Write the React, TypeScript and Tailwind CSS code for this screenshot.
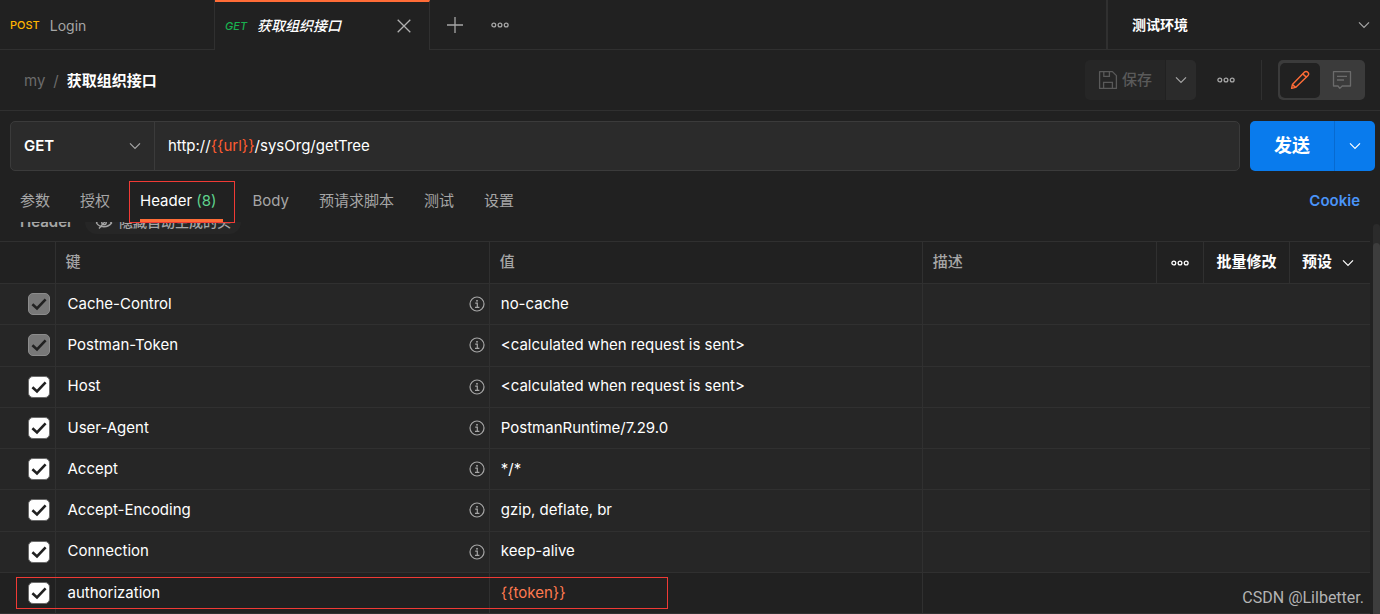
import { useState } from 'react';

const sans = "font-['Inter','Noto_Sans_CJK_SC',sans-serif]";

function Chevron({ className = '' }: { className?: string }) {
  return (
    <svg className={`pointer-events-none h-3 w-3 shrink-0 ${className}`} viewBox="0 0 12 12" fill="none" stroke="currentColor" strokeWidth="1.2" aria-hidden="true">
      <path d="M1 3.4 6 8.4 11 3.4" />
    </svg>
  );
}

function Dots() {
  return (
    <svg width="18" height="6" viewBox="0 0 18 6" fill="none" stroke="currentColor" strokeWidth="1.3" aria-hidden="true">
      <circle cx="2.8" cy="3" r="1.9" />
      <circle cx="9" cy="3" r="1.9" />
      <circle cx="15.2" cy="3" r="1.9" />
    </svg>
  );
}

function InfoIcon() {
  return (
    <svg className="shrink-0 text-[#a6a6a6]" width="16" height="16" viewBox="0 0 16 16" fill="none" stroke="currentColor" aria-hidden="true">
      <circle cx="8" cy="8" r="7" strokeWidth="1.2" />
      <path d="M6.2 7.2H8.3V11.2M6 11.4H10.4" strokeWidth="1.2" />
      <rect x="7.2" y="4" width="1.6" height="1.6" fill="currentColor" stroke="none" />
    </svg>
  );
}

function SaveIcon() {
  return (
    <svg width="20" height="20" viewBox="0 0 20 20" fill="none" stroke="currentColor" strokeWidth="1.3" aria-hidden="true">
      <path d="M1.6 1.6H14.4L18.4 5.6V18.4H1.6Z" strokeLinejoin="round" />
      <path d="M5.8 1.8V6.4H11.4V1.8M5.6 18.2V12.4H14.4V18.2" />
    </svg>
  );
}

function PencilIcon() {
  return (
    <svg width="20" height="20" viewBox="0 0 20 20" fill="none" stroke="currentColor" strokeWidth="1.4" strokeLinejoin="round" aria-hidden="true">
      <path d="M1.6 18.4 2.4 14.6 14.3 2.2A2.2 2.2 0 0 1 17.8 5.7L5.6 17.4Z" />
      <path d="M13.2 3.4Q14 6.6 16.8 6.7M2.4 14.6 5.6 17.4" />
    </svg>
  );
}

function CommentIcon() {
  return (
    <svg width="20" height="20" viewBox="0 0 20 20" fill="none" stroke="currentColor" strokeWidth="1.3" strokeLinejoin="round" aria-hidden="true">
      <path d="M1.5 1.6H18.5V16H10.2L7.8 18.4 6 16H1.5Z" />
      <path d="M5 6.4H15M5 10H12" />
    </svg>
  );
}

function HideIcon() {
  return (
    <svg width="18" height="16" viewBox="0 0 18 16" fill="none" stroke="currentColor" strokeWidth="1.4" aria-hidden="true">
      <path d="M1.5 9C4 3.5 13 3.5 16.5 9 13 14 4.5 14 1.5 9ZM4 14.5 15 2" />
      <circle cx="9" cy="8.6" r="2.2" />
    </svg>
  );
}

type Header = { key: string; value: string; auto?: boolean; locked?: boolean; variable?: boolean };

const headers: Header[] = [
  { key: 'Cache-Control', value: 'no-cache', auto: true, locked: true },
  { key: 'Postman-Token', value: '<calculated when request is sent>', auto: true, locked: true },
  { key: 'Host', value: '<calculated when request is sent>', auto: true },
  { key: 'User-Agent', value: 'PostmanRuntime/7.29.0', auto: true },
  { key: 'Accept', value: '*/*', auto: true },
  { key: 'Accept-Encoding', value: 'gzip, deflate, br', auto: true },
  { key: 'Connection', value: 'keep-alive', auto: true },
  { key: 'authorization', value: '{{token}}', variable: true },
];

function Tick({ label, locked }: { label: string; locked?: boolean }) {
  return (
    <label className="ml-7 grid w-[22px] place-items-center">
      <input
        type="checkbox"
        aria-label={label}
        defaultChecked
        disabled={locked}
        className="peer col-start-1 row-start-1 h-[22px] w-[22px] appearance-none rounded-[5px] border border-[#6b6b6b] bg-transparent checked:bg-white disabled:border-[#8c8c8c] disabled:bg-[#787878]"
      />
      <svg className="pointer-events-none invisible col-start-1 row-start-1 peer-checked:visible" width="16" height="16" viewBox="0 0 16 16" fill="none" stroke="#212121" strokeWidth="2.6" aria-hidden="true">
        <path d="M1.4 8.2 6 12.4 14.6 3.4" />
      </svg>
    </label>
  );
}

function TopTabs() {
  return (
    <div className="flex h-[50px]">
      <a href="#login" className="flex w-[215px] items-center gap-[10px] border-r border-b border-[#303030] pl-[10px] pt-[2px]">
        <span className="text-[11px] font-medium text-[#ffb400]">POST</span>
        <span className="text-sm text-[#a6a6a6]">Login</span>
      </a>
      <div className="flex w-[215px] items-center border-t-2 border-r border-t-[#ff6c37] border-r-[#303030] pr-[15px] pl-[10px]">
        <a href="#org" className="flex items-center gap-[10px] italic">
          <span className="text-[11px] font-medium text-[#19b04f]">GET</span>
          <span className="text-sm font-medium text-white">获取组织接口</span>
        </a>
        <button aria-label="关闭标签" className="ml-auto grid h-5 w-5 place-items-center text-[#b0b0b0]">
          <svg width="14" height="14" viewBox="0 0 14 14" fill="none" stroke="currentColor" strokeWidth="1.3" aria-hidden="true">
            <path d="M.7.7 13.3 13.3M13.3.7.7 13.3" />
          </svg>
        </button>
      </div>
      <div className="flex grow items-center gap-7 border-b border-[#303030] pl-[17px] text-[#a6a6a6]">
        <button aria-label="新建标签">
          <svg width="16" height="16" viewBox="0 0 16 16" fill="none" stroke="currentColor" strokeWidth="1.3" aria-hidden="true">
            <path d="M8 0V16M0 8H16" />
          </svg>
        </button>
        <button aria-label="更多标签操作">
          <Dots />
        </button>
      </div>
      <label className="grid w-[274px] items-center border-b border-l-2 border-[#303030] pr-[10px]">
        <select aria-label="环境" className="col-start-1 row-start-1 h-full appearance-none bg-transparent pl-6 text-sm font-bold text-white">
          <option>测试环境</option>
        </select>
        <Chevron className="col-start-1 row-start-1 justify-self-end text-[#a6a6a6]" />
      </label>
    </div>
  );
}

function TitleBar() {
  return (
    <div className="flex h-[61px] items-center border-b border-[#303030] pr-[15px] pl-6">
      <nav className="flex items-center gap-2 pt-[2px] text-[15px]">
        <a href="#my" className="text-[#6b6b6b]">my</a>
        <span className="text-[#6b6b6b]">/</span>
        <span className="font-bold text-white">获取组织接口</span>
      </nav>
      <div className="ml-auto flex items-center">
        <button disabled className="flex h-10 w-20 items-center justify-center gap-1 rounded-l-[5px] bg-[#262626] text-[15px] font-medium text-[#5a5a5a]">
          <SaveIcon />
          保存
        </button>
        <button aria-label="保存选项" className="ml-px grid h-10 w-[30px] place-items-center rounded-r-[5px] bg-[#2b2b2b] text-[#a6a6a6]">
          <Chevron />
        </button>
        <button aria-label="更多操作" className="ml-[21px] text-[#a6a6a6]">
          <Dots />
        </button>
        <div className="ml-[26px] h-10 w-px bg-[#303030]" />
        <div className="ml-4 flex h-10 items-center rounded-[5px] bg-[#3b3b3b] px-[2px]">
          <button aria-label="编辑" className="grid h-[35px] w-10 place-items-center rounded-[5px] bg-[#212121] text-[#ff6c37]">
            <PencilIcon />
          </button>
          <button aria-label="评论" className="grid h-[35px] w-[43px] place-items-center text-[#6b6b6b]">
            <CommentIcon />
          </button>
        </div>
      </div>
    </div>
  );
}

function RequestBar() {
  const [url, setUrl] = useState('http://{{url}}/sysOrg/getTree');
  return (
    <div className="flex gap-[10px] pt-[10px] pr-[5px] pl-[10px]">
      <div className="flex h-[50px] grow rounded-[5px] border border-[#3b3b3b] bg-[#2b2b2b]">
        <label className="grid w-36 items-center border-r border-[#3b3b3b] pr-[13px]">
          <select aria-label="请求方法" className="col-start-1 row-start-1 h-full appearance-none bg-transparent pl-[13px] text-[15px] font-semibold text-white">
            <option>GET</option>
            <option>POST</option>
          </select>
          <Chevron className="col-start-1 row-start-1 justify-self-end text-[#a6a6a6]" />
        </label>
        <div className="grid grow items-center text-[15px]">
          <input
            aria-label="请求地址"
            value={url}
            onChange={(e) => setUrl(e.target.value)}
            className="col-start-1 row-start-1 h-full bg-transparent px-[13px] text-transparent caret-white outline-none"
          />
          <span aria-hidden="true" className="pointer-events-none col-start-1 row-start-1 px-[13px] whitespace-pre text-white">
            {url.split(/(\{\{.*?\}\})/).map((part, i) => (
              <span key={i} className={part.startsWith('{{') ? 'text-[#ff5c30]' : ''}>{part}</span>
            ))}
          </span>
        </div>
      </div>
      <div className="flex h-[50px] overflow-hidden rounded-[5px] bg-[#097bed] text-white">
        <button className="w-[85px] border-r border-[#076ad0] text-lg font-bold">发送</button>
        <button aria-label="发送选项" className="grid w-10 place-items-center">
          <Chevron />
        </button>
      </div>
    </div>
  );
}

function SectionTabs() {
  return (
    <nav className="relative z-10 flex h-[51px] items-center px-5 pt-[10px] text-[15px] text-[#a6a6a6]">
      <a href="#params">参数</a>
      <a href="#auth" className="ml-[30px]">授权</a>
      <a href="#headers" className="relative ml-[30px] flex h-full items-center pr-[6px] text-white">
        <span>Header <span className="text-[#5fd38d]">(8)</span></span>
        <span className="absolute inset-x-0 bottom-0 h-[3px] bg-[#ff6c37]" />
        <span className="absolute -right-3 -left-[11px] top-0 -bottom-[1px] border border-[#f03a35]" />
      </a>
      <a href="#body" className="ml-[30px]">Body</a>
      <a href="#pre" className="ml-[30px]">预请求脚本</a>
      <a href="#tests" className="ml-[30px]">测试</a>
      <a href="#settings" className="ml-[30px]">设置</a>
      <a href="#cookies" className="ml-auto font-semibold text-[#4a94f8]">Cookie</a>
    </nav>
  );
}

function HeaderTable() {
  return (
    <table className="h-[373px] w-full table-fixed border-collapse text-left text-[15px]">
      <colgroup>
        <col className="w-[55px]" />
        <col className="w-[31.7%]" />
        <col className="w-[31.6%]" />
        <col />
      </colgroup>
      <thead>
        <tr className="border-y border-[#303030] text-[#a6a6a6]">
          <th className="border-r border-[#303030] p-0"><span className="sr-only">启用</span></th>
          <th className="border-r border-[#303030] px-[10px] py-0 font-medium">键</th>
          <th className="border-r border-[#303030] px-[10px] py-0 font-medium">值</th>
          <th className="p-0 font-medium">
            <div className="flex h-[41px] items-stretch text-white">
              <span className="flex grow items-center pl-[10px] text-[#a6a6a6]">描述</span>
              <button aria-label="列选项" className="grid w-[47px] place-items-center border-l border-[#303030]">
                <Dots />
              </button>
              <button className="w-[86px] border-l border-[#303030] font-bold">批量修改</button>
              <button className="flex w-[81px] items-center gap-[10px] border-l border-[#303030] pl-3 font-bold">
                预设
                <Chevron />
              </button>
            </div>
          </th>
        </tr>
      </thead>
      <tbody className="text-white">
        {headers.map((h) => (
          <tr key={h.key} className={`relative border-b border-[#303030] ${h.auto ? 'bg-[#262626]' : ''}`}>
            <td className="border-r border-[#303030] p-0">
              <Tick label={h.key} locked={h.locked} />
              {h.variable && <span className="pointer-events-none absolute top-[5px] bottom-1 left-4 w-[47.6%] border border-[#f03a35]" />}
            </td>
            <td className="border-r border-[#303030] py-0 pr-1 pl-3">
              <div className="flex items-center justify-between">
                {h.key}
                {h.auto && <InfoIcon />}
              </div>
            </td>
            <td className={`border-r border-[#303030] py-0 pl-[11px] ${h.variable ? 'text-[#ff7a50]' : ''}`}>{h.value}</td>
            <td className="p-0" />
          </tr>
        ))}
      </tbody>
    </table>
  );
}

export default function App() {
  return (
    <main className={`relative min-h-screen overflow-hidden bg-[#212121] ${sans}`}>
      <TopTabs />
      <TitleBar />
      <RequestBar />
      <SectionTabs />
      <div className="flex gap-[3px]">
        <div className="min-w-0 grow">
          <div className="flex h-[19px] items-end gap-3 overflow-hidden pl-5 pb-2 text-[15px] font-medium text-[#a6a6a6]">
            <span className="-mb-px leading-6 font-semibold">Header</span>
            <button className="-mb-px flex h-6 shrink-0 items-center gap-[6px] rounded-full bg-[#262626] px-[10px] text-sm">
              <HideIcon />
              隐藏自动生成的头
            </button>
          </div>
          <HeaderTable />
        </div>
        <div className="mt-[2px] w-[7px] shrink-0 rounded-t bg-[#2b2b2b] pt-[19px]">
          <div className="h-full rounded-t bg-[#3d3d3d]" />
        </div>
      </div>
      <p className="absolute right-4 bottom-1 font-['Roboto',sans-serif] text-base text-[#b4b4b4]">CSDN @Lilbetter.</p>
    </main>
  );
}
